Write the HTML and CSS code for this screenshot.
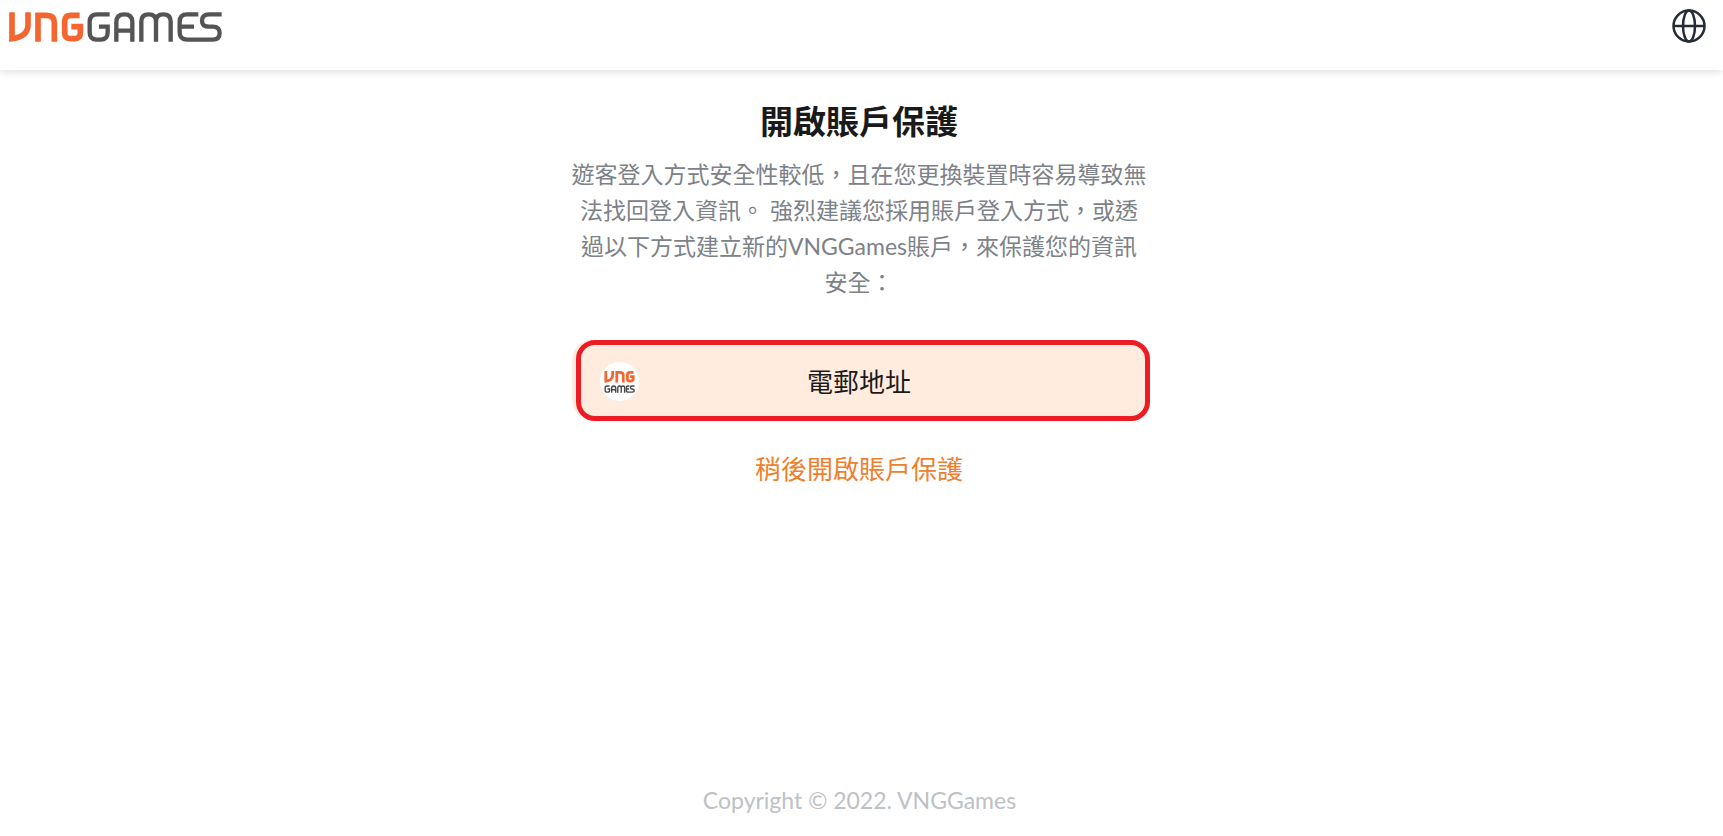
FILE: index.html
```html
<!DOCTYPE html>
<html lang="zh-Hant">
<head>
  <meta charset="utf-8" />
  <meta name="viewport" content="width=device-width, initial-scale=1" />
  <title>VNGGames</title>
  <link rel="stylesheet" href="styles.css">
</head>

<body>
  <header class="main-header">
    <a class="logo" href="#" aria-label="VNGGames">
      <svg viewBox="27 36 639 90" fill="none">
        <g stroke="#f5652f" stroke-width="17">
          <path d="M36 37V116C66 112 84 100 84 74V37" />
          <path d="M114 125V46H140Q163 46 163 68V125" />
          <path d="M239 46H213Q194 46 194 64V98Q194 116 213 116H222Q241 116 241 98V80H214" />
        </g>
        <g stroke="#545454" stroke-width="13">
          <path d="M329 43H292Q269 43 269 65V97Q269 119 290 119H302Q323 119 323 97V80H297" />
          <path d="M349 125V66Q349 43 373 43Q397 43 397 66V125M349 92H397" />
          <path d="M424 125V64Q424 43 446 43Q468 43 468 64V125M468 64Q468 43 490 43Q512 43 512 64V125" />
          <path d="M595 43H561Q539 43 539 65V97Q539 119 562 119H637Q659 119 659 99Q659 80 638 80H627Q606 80 606 62Q606 43 628 43H665M539 80H582" />
        </g>
      </svg>
    </a>
    <button class="language-button" type="button" aria-label="Language">
      <svg viewBox="0 0 34 34" fill="none" stroke="#262b38" stroke-width="2.5">
        <circle cx="17" cy="17" r="15.5" />
        <ellipse cx="17" cy="17" rx="6" ry="15.5" />
        <path d="M1 17H33" />
      </svg>
    </button>
  </header>

  <main class="protect">
    <h1 class="protect-title">開啟賬戶保護</h1>
    <p class="protect-text">遊客登入方式安全性較低，且在您更換裝置時容易導致無法找回登入資訊。 強烈建議您採用賬戶登入方式，或透過以下方式建立新的VNGGames賬戶，來保護您的資訊安全：</p>

    <button class="email-button" type="button">
      <svg class="email-icon" viewBox="0 0 114 114" fill="none">
        <circle cx="57" cy="57" r="57" fill="#fff" />
        <g stroke="#f5652f" stroke-width="8">
          <path d="M17 26V56C32 54 37 48 37 38V26" />
          <path d="M49 60V30H58Q68 30 68 39V60" />
          <path d="M98 30H88Q80 30 80 38V49Q80 56 88 56H90Q97 56 97 50V43H88" />
        </g>
        <g stroke="#454545" stroke-width="4">
          <path d="M28 70H21Q15 70 15 76V83Q15 88 21 88H22Q28 88 28 83V79H22" />
          <path d="M34 90V77Q34 70 40 70Q46 70 46 77V90M34 81H46" />
          <path d="M52 90V75Q52 70 57 70Q62 70 62 75V90M62 75Q62 70 67 70Q72 70 72 75V90" />
          <path d="M86 70H83Q77 70 77 75V83Q77 88 83 88H95Q100 88 100 84Q100 79 95 79H93Q89 79 89 74Q89 70 93 70H101M77 79H85" />
        </g>
      </svg>
      <span>電郵地址</span>
    </button>

    <a class="later-link" href="#">稍後開啟賬戶保護</a>
  </main>

  <footer class="main-footer">Copyright © 2022. VNGGames</footer>
</body>
</html>
```
FILE: styles.css
```css
* {
  box-sizing: border-box;
}

body {
  display: flex;
  flex-direction: column;
  min-height: 100vh;
  margin: 0;
  background-color: white;
  color: #1a1a1a;
  font-family: Lato, 'Noto Sans CJK TC', sans-serif;
  font-size: 23px;
}

.main-header {
  display: flex;
  justify-content: space-between;
  align-items: flex-start;
  height: 70px;
  padding: 9px 17px 0 9px;
  box-shadow: 0 2px 8px rgba(0, 0, 0, 0.13);
}

.logo {
  width: 213px;
  margin-top: 3px;
}

.logo svg,
.language-button svg {
  display: block;
  width: 100%;
}

.language-button {
  width: 34px;
  padding: 0;
  border: none;
  background: none;
  cursor: pointer;
}

.protect {
  display: flex;
  flex-direction: column;
  align-items: center;
  width: 100%;
  max-width: 580px;
  margin: 0 auto;
  padding: 27px 5px 0 0;
  text-align: center;
}

.protect-title {
  margin: 0;
  font-size: 33px;
  line-height: 48px;
}

.protect-text {
  margin: 11px 0 40px;
  color: #7d8188;
  line-height: 36px;
}

.email-button {
  position: relative;
  display: flex;
  align-items: center;
  justify-content: center;
  width: 100%;
  height: 80px;
  padding: 0;
  border: none;
  border-radius: 20px;
  background-color: #ffecdf;
  color: #1a1a1a;
  font-family: inherit;
  font-size: 26px;
  cursor: pointer;
}

/* Highlight frame, shifted to the right of the button */
.email-button::after {
  content: '';
  position: absolute;
  top: 0;
  left: 4px;
  right: -3px;
  bottom: -1px;
  border: 5px solid #ed1c24;
  border-radius: 19px;
}

.email-icon {
  position: absolute;
  top: 22px;
  left: 28px;
  width: 39px;
}

.later-link {
  margin-top: 30px;
  color: #ee7f2e;
  font-size: 26px;
  line-height: 38px;
  text-decoration: none;
}

.main-footer {
  margin-top: auto;
  padding: 0 4px 21px 0;
  color: #bdc1c6;
  line-height: 30px;
  text-align: center;
}
```
